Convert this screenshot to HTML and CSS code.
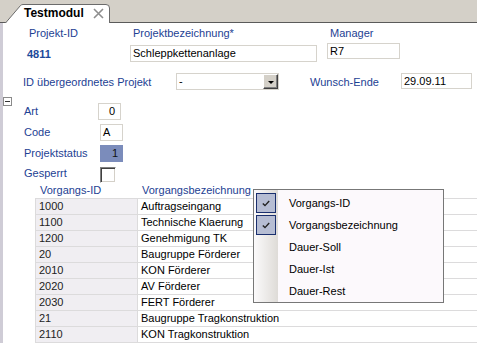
FILE: index.html
```html
<!DOCTYPE html>
<html lang="de">
<head>
    <meta charset="UTF-8">
    <title>Testmodul</title>
    <link rel="stylesheet" href="styles.css">
</head>
<body>
    <div class="tabstrip">
        <div class="tab">
            <svg class="tab-shape" width="106" height="19" viewBox="0 0 106 19">
                <path d="M0.5 19 L15.5 1.5 Q16.5 0.5 18 0.5 L101 0.5 Q104.5 0.5 104.5 4 L104.5 19" fill="#fff" stroke="#6b6b6b" stroke-width="1"/>
            </svg>
            <span class="tab-title">Testmodul</span>
            <svg class="tab-close" width="11" height="11" viewBox="0 0 11 11">
                <path d="M1 1 L10 10 M10 1 L1 10" stroke="#8e8e8e" stroke-width="1.6"/>
            </svg>
        </div>
    </div>

    <div class="page">
        <div class="head-grid">
            <div class="label pad-id">Projekt-ID</div>
            <div class="label pad-small">Projektbezeichnung*</div>
            <div class="label pad-small">Manager</div>

            <div class="project-id">4811</div>
            <div class="field field-name">Schleppkettenanlage</div>
            <div class="field field-manager">R7</div>
        </div>

        <div class="parent-row">
            <div class="label parent-label">ID übergeordnetes Projekt</div>
            <div class="select">
                <span>-</span>
                <span class="select-btn"><span class="arrow"></span></span>
            </div>
            <div class="label wish-label">Wunsch-Ende</div>
            <div class="field field-date">29.09.11</div>
        </div>

        <div class="toggle"></div>

        <div class="fields">
            <div class="label">Art</div>
            <div class="field small right art">0</div>
            <div class="label">Code</div>
            <div class="field small">A</div>
            <div class="label">Projektstatus</div>
            <div class="field small right status">1</div>
            <div class="label label-last">Gesperrt</div>
            <div class="checkbox"></div>
        </div>

        <div class="table">
            <div class="th th-id">Vorgangs-ID</div>
            <div class="th th-name">Vorgangsbezeichnung</div>

            <div class="td td-id">1000</div><div class="td td-name">Auftragseingang</div>
            <div class="td td-id">1100</div><div class="td td-name">Technische Klaerung</div>
            <div class="td td-id">1200</div><div class="td td-name">Genehmigung TK</div>
            <div class="td td-id">20</div><div class="td td-name">Baugruppe Förderer</div>
            <div class="td td-id">2010</div><div class="td td-name">KON Förderer</div>
            <div class="td td-id">2020</div><div class="td td-name">AV Förderer</div>
            <div class="td td-id">2030</div><div class="td td-name">FERT Förderer</div>
            <div class="td td-id">21</div><div class="td td-name">Baugruppe Tragkonstruktion</div>
            <div class="td td-id">2110</div><div class="td td-name">KON Tragkonstruktion</div>
            <div class="td td-id"></div><div class="td td-name"></div>
        </div>

        <div class="menu">
            <div class="menu-item">
                <span class="menu-check"><svg width="8" height="7" viewBox="0 0 8 7"><path d="M0.8 3.4 L3 5.6 L7.2 1" fill="none" stroke="#222" stroke-width="1.4"/></svg></span>
                <span class="menu-text">Vorgangs-ID</span>
            </div>
            <div class="menu-item">
                <span class="menu-check"><svg width="8" height="7" viewBox="0 0 8 7"><path d="M0.8 3.4 L3 5.6 L7.2 1" fill="none" stroke="#222" stroke-width="1.4"/></svg></span>
                <span class="menu-text">Vorgangsbezeichnung</span>
            </div>
            <div class="menu-item">
                <span class="menu-blank"></span>
                <span class="menu-text">Dauer-Soll</span>
            </div>
            <div class="menu-item">
                <span class="menu-blank"></span>
                <span class="menu-text">Dauer-Ist</span>
            </div>
            <div class="menu-item">
                <span class="menu-blank"></span>
                <span class="menu-text">Dauer-Rest</span>
            </div>
        </div>
    </div>
</body>
</html>
```

FILE: styles.css
```css
html, body {
    margin: 0;
    padding: 0;
    background: #fff;
    overflow: hidden;
}
body {
    font-family: "Liberation Sans", Arial, sans-serif;
    font-size: 11px;
    color: #000;
    height: 343px;
}
.tabstrip {
    height: 23px;
    background: #d4d0c8;
    box-shadow: inset 0 -1px #5a5a5a;
    display: flex;
    align-items: flex-start;
}
.tab {
    position: relative;
    width: 106px;
    height: 19px;
    margin: 4px 0 0 5px;
}
.tab-shape {
    position: absolute;
    left: 0;
    top: 0;
}
.tab-title {
    position: relative;
    display: block;
    padding-left: 19px;
    line-height: 18px;
    font-size: 12px;
    font-weight: bold;
    color: #000;
}
.tab-close {
    position: absolute;
    left: 88px;
    top: 4px;
}
.page {
    position: relative;
    border-left: 3px solid #cfccd6;
    height: 320px;
}
.label {
    color: #1d4193;
    line-height: 14px;
    white-space: nowrap;
}
.field {
    border: 1px solid #d6d3cc;
    background: #fff;
    box-sizing: border-box;
    padding-left: 2px;
    white-space: nowrap;
}
.head-grid {
    display: grid;
    grid-template-columns: 127px 197px 1fr;
    row-gap: 3px;
    padding-top: 3px;
}
.pad-id {
    padding-left: 26px;
}
.pad-small {
    padding-left: 3px;
}
.project-id {
    padding-left: 24px;
    font-weight: bold;
    color: #1d4a9a;
    line-height: 18px;
    margin-top: 2px;
}
.field-name {
    width: 187px;
    height: 17px;
    line-height: 15px;
    margin-top: 2px;
}
.field-manager {
    width: 73px;
    height: 16px;
    line-height: 14px;
}
.parent-row {
    display: flex;
    align-items: center;
    margin-top: 10px;
    height: 17px;
}
.parent-label {
    width: 153px;
    padding-left: 20px;
}
.select {
    width: 103px;
    height: 17px;
    box-sizing: border-box;
    border: 1px solid #d6d3cc;
    display: flex;
    justify-content: space-between;
    padding-left: 2px;
    line-height: 15px;
}
.select-btn {
    width: 15px;
    height: 15px;
    box-sizing: border-box;
    background: #d4d0c8;
    border: 1px solid;
    border-color: #fff #404040 #404040 #fff;
    box-shadow: inset -1px -1px #808080;
    display: flex;
    align-items: center;
    justify-content: center;
}
.arrow {
    width: 0;
    height: 0;
    border-left: 3px solid transparent;
    border-right: 3px solid transparent;
    border-top: 3px solid #000;
    margin-top: 1px;
}
.wish-label {
    margin-left: 31px;
    width: 91px;
}
.field-date {
    width: 71px;
    height: 16px;
    line-height: 14px;
    margin-top: -2px;
}
.toggle {
    width: 9px;
    height: 9px;
    box-sizing: border-box;
    border: 1px solid #8a8a8a;
    margin-top: 7px;
    margin-bottom: -3px;
    position: relative;
    background: #fff;
}
.toggle::after {
    content: "";
    position: absolute;
    left: 1px;
    top: 3px;
    width: 5px;
    height: 1px;
    background: #333;
}
.fields {
    display: grid;
    grid-template-columns: 76px auto;
    grid-template-rows: 21px 21px 21px 16px;
    padding-left: 21px;
    justify-items: start;
}
.fields .label {
    line-height: 17px;
}
.fields .label-last {
    line-height: 14px;
}
.small {
    width: 23px;
    height: 17px;
    line-height: 15px;
}
.right {
    text-align: right;
    padding-right: 4px;
}
.art {
    margin-left: -2px;
    padding-right: 5px;
}
.status {
    background: #7b8cbb;
    border-color: #7b8cbb;
    color: #111;
}
.checkbox {
    width: 16px;
    height: 16px;
    box-sizing: border-box;
    margin-top: 1px;
    border: 1px solid;
    border-color: #808080 #fff #fff #808080;
    box-shadow: inset 1px 1px #404040, inset -1px -1px #d4d0c8;
    background: #fff;
}
.table {
    display: grid;
    grid-template-columns: 102px 1fr;
    margin-left: 32px;
}
.th {
    color: #1d4193;
    line-height: 16px;
    height: 16px;
    padding-left: 5px;
    white-space: nowrap;
    overflow: hidden;
}
.td {
    height: 15px;
    line-height: 15px;
    border-top: 1px solid #dcdbdc;
    padding-left: 3px;
    white-space: nowrap;
    overflow: hidden;
}
.td-id {
    background: #f0eef2;
    border-left: 1px solid #dcdbdc;
    color: #222;
}
.td-name {
    border-left: 1px solid #dcdbdc;
}
.menu {
    position: absolute;
    left: 250px;
    top: 166px;
    width: 189px;
    padding: 2px 0 0;
    border: 1px solid #777;
    background: linear-gradient(to right, #fbfafb 0, #dedbd7 24px, #fcf9fc 24px);
}
.menu-item {
    display: flex;
    align-items: center;
    height: 22px;
}
.menu-check {
    width: 20px;
    height: 20px;
    box-sizing: border-box;
    margin-left: 2px;
    border: 1px solid #1a2f6e;
    background: #b6bdd3;
    display: flex;
    align-items: center;
    justify-content: center;
}
.menu-blank {
    width: 20px;
    margin-left: 2px;
}
.menu-text {
    margin-left: 13px;
    font-size: 11px;
    color: #000;
}
```
